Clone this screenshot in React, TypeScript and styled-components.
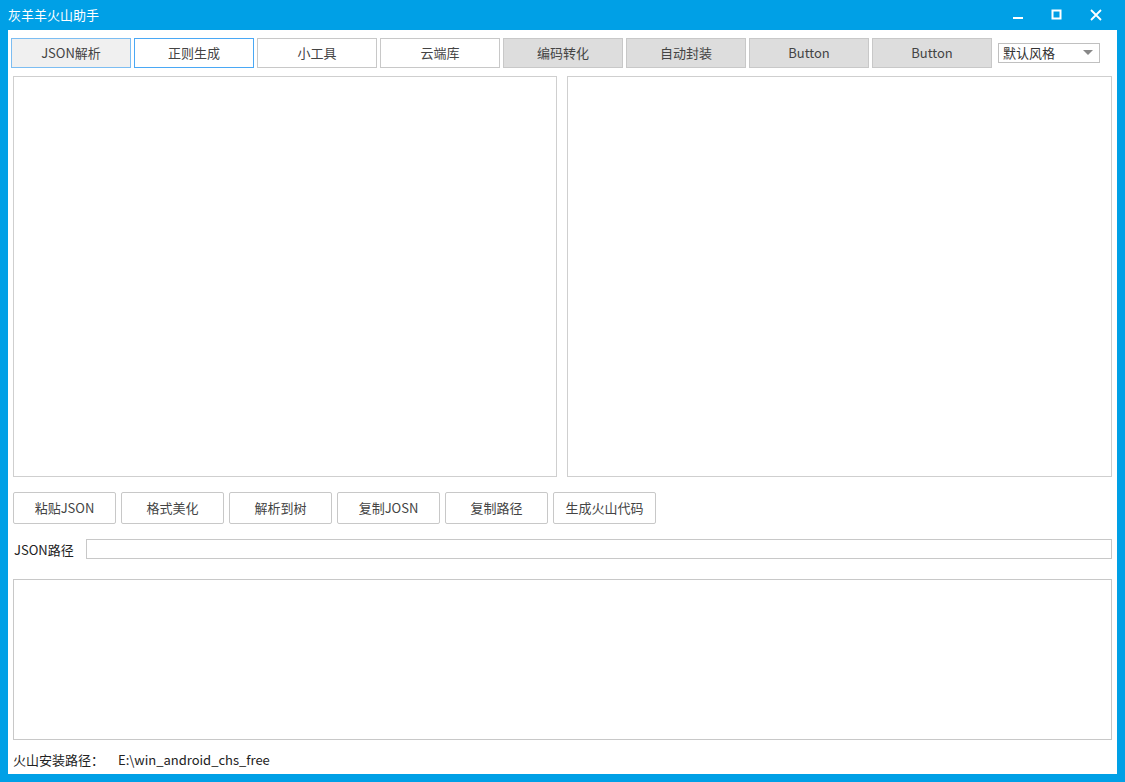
import * as React from 'react';
import styled, { createGlobalStyle } from 'styled-components';

const GlobalStyle = createGlobalStyle`
  html, body {
    margin: 0;
    padding: 0;
    background: #00a0e6;
  }
  * {
    box-sizing: border-box;
  }
`;

const font = `"Microsoft YaHei", "Noto Sans CJK SC", "Noto Sans", sans-serif`;

//window frame
const Frame = styled.div`
  width: 1125px;
  height: 782px;
  background: #00a0e6;
  display: flex;
  flex-direction: column;
  padding: 0 8px 8px 8px;
  font-family: ${font};
  font-size: 13px;
  color: #333;
`;

const TitleBar = styled.div`
  height: 30px;
  display: flex;
  align-items: center;
  color: #ffffff;
  font-size: 13px;
`;

const Title = styled.div`
  flex: 1;
  padding-bottom: 1px;
`;

const WinButtons = styled.div`
  display: flex;
  align-items: center;
  margin-right: 2px;
`;

const WinButton = styled.div`
  width: 39px;
  height: 30px;
  display: flex;
  align-items: center;
  justify-content: center;
`;

const Body = styled.div`
  flex: 1;
  background: #ffffff;
  display: flex;
  flex-direction: column;
  padding: 8px 5px 0 3px;
`;

const TabRow = styled.div`
  display: flex;
  align-items: center;
  gap: 3px;
  height: 30px;
`;

const Tab = styled.div<{ $kind: 'active' | 'focus' | 'plain' | 'gray' }>`
  width: 120px;
  height: 30px;
  display: flex;
  align-items: center;
  justify-content: center;
  padding-bottom: 2px;
  color: #444;
  background: ${(p) =>
    p.$kind === 'active' ? '#f0f0f0' : p.$kind === 'gray' ? '#dddddd' : '#ffffff'};
  border: 1px solid
    ${(p) =>
      p.$kind === 'active' ? '#7cbdf2' : p.$kind === 'focus' ? '#4aa8f5' : '#c8c8c8'};
`;

const Select = styled.div`
  width: 102px;
  height: 20px;
  margin-left: 3px;
  border: 1px solid #c0c0c0;
  display: flex;
  align-items: center;
  justify-content: space-between;
  padding: 0 6px 1px 4px;
  color: #333;
`;

const Caret = styled.div`
  width: 0;
  height: 0;
  border-left: 5px solid transparent;
  border-right: 5px solid transparent;
  border-top: 5px solid #888;
`;

const PanelRow = styled.div`
  display: flex;
  gap: 10px;
  margin: 8px 0 0 2px;
  height: 401px;
`;

const Panel = styled.div<{ $w: number }>`
  width: ${(p) => p.$w}px;
  flex-shrink: 0;
  height: 100%;
  border: 1px solid #cfcfcf;
`;

const ActionRow = styled.div`
  display: flex;
  gap: 5px;
  margin: 15px 0 0 2px;
`;

const ActionButton = styled.div`
  width: 103px;
  height: 32px;
  border: 1px solid #c8c8c8;
  border-radius: 2px;
  display: flex;
  align-items: center;
  justify-content: center;
  padding-bottom: 2px;
  color: #444;
`;

const PathRow = styled.div`
  display: flex;
  align-items: center;
  margin: 15px 0 0 3px;
  height: 20px;
`;

const Label = styled.div`
  width: 72px;
  color: #222;
`;

const PathInput = styled.div`
  flex: 1;
  height: 20px;
  border: 1px solid #c8c8c8;
`;

const OutputBox = styled.div`
  margin: 20px 0 0 2px;
  height: 161px;
  border: 1px solid #c8c8c8;
`;

const Footer = styled.div`
  display: flex;
  align-items: center;
  margin: 10px 0 0 2px;
  height: 18px;
  color: #222;
`;

const FooterLabel = styled.div`
  width: 105px;
`;

const tabs: { text: string; kind: 'active' | 'focus' | 'plain' | 'gray' }[] = [
  { text: 'JSON解析', kind: 'active' },
  { text: '正则生成', kind: 'focus' },
  { text: '小工具', kind: 'plain' },
  { text: '云端库', kind: 'plain' },
  { text: '编码转化', kind: 'gray' },
  { text: '自动封装', kind: 'gray' },
  { text: 'Button', kind: 'gray' },
  { text: 'Button', kind: 'gray' },
];

const actions = ['粘贴JSON', '格式美化', '解析到树', '复制JOSN', '复制路径', '生成火山代码'];

const App = () => {
  return (
    <Frame>
      <GlobalStyle />
      <TitleBar>
        <Title>灰羊羊火山助手</Title>
        <WinButtons>
          <WinButton>
            <svg width="12" height="12" viewBox="0 0 12 12">
              <rect x="1" y="8" width="10" height="2" fill="#fff" />
            </svg>
          </WinButton>
          <WinButton>
            <svg width="12" height="12" viewBox="0 0 12 12">
              <rect x="1.5" y="1.5" width="8" height="8" fill="none" stroke="#fff" strokeWidth="2" />
            </svg>
          </WinButton>
          <WinButton>
            <svg width="14" height="14" viewBox="0 0 14 14">
              <path d="M2 2 L12 12 M12 2 L2 12" stroke="#fff" strokeWidth="1.8" />
            </svg>
          </WinButton>
        </WinButtons>
      </TitleBar>
      <Body>
        <TabRow>
          {tabs.map((t, i) => (
            <Tab key={i} $kind={t.kind}>
              {t.text}
            </Tab>
          ))}
          <Select>
            <span>默认风格</span>
            <Caret />
          </Select>
        </TabRow>
        <PanelRow>
          <Panel $w={544} />
          <Panel $w={545} />
        </PanelRow>
        <ActionRow>
          {actions.map((a) => (
            <ActionButton key={a}>{a}</ActionButton>
          ))}
        </ActionRow>
        <PathRow>
          <Label>JSON路径</Label>
          <PathInput />
        </PathRow>
        <OutputBox />
        <Footer>
          <FooterLabel>火山安装路径：</FooterLabel>
          <span>E:\win_android_chs_free</span>
        </Footer>
      </Body>
    </Frame>
  );
};

export default App;
